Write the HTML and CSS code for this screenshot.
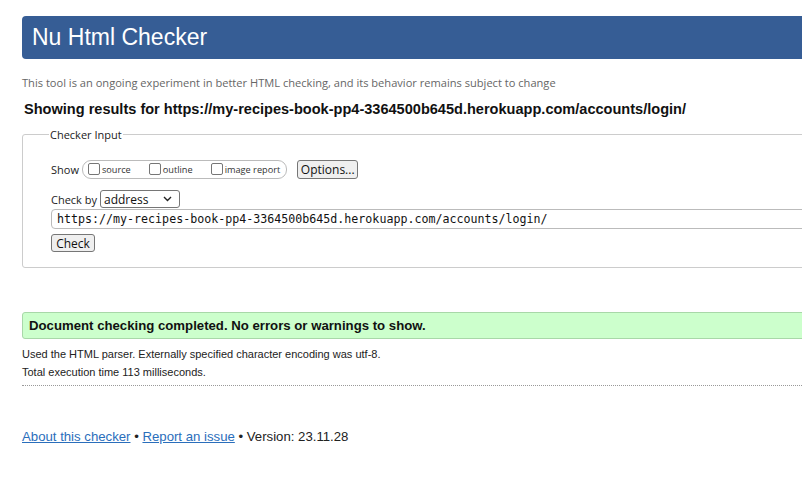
FILE: index.html
```html
<!DOCTYPE html>
<html>
<head>
<meta charset="utf-8">
<link rel="stylesheet" href="styles.css">
</head>
<body>
<div class="page">
  <h1 class="banner">Nu Html Checker</h1>
  <p class="tagline">This tool is an ongoing experiment in better HTML checking, and its behavior remains subject to change</p>
  <p class="results-for">Showing results for https://my-recipes-book-pp4-3364500b645d.herokuapp.com/accounts/login/</p>
  <fieldset class="input-box">
    <legend class="legend">Checker Input</legend>
    <div class="row show-row">
      <span class="label">Show</span>
      <span class="opts">
        <label class="opt"><span class="cb"></span>source</label>
        <label class="opt"><span class="cb"></span>outline</label>
        <label class="opt"><span class="cb"></span>image report</label>
      </span>
      <span class="btn options-btn">Options...</span>
    </div>
    <div class="row by-row">
      <span class="label">Check by</span>
      <span class="select">address<svg class="chev" width="9" height="6" viewBox="0 0 9 6"><path d="M1 1l3.5 3.5L8 1" fill="none" stroke="#222" stroke-width="1.4"/></svg></span>
    </div>
    <div class="url-input">https://my-recipes-book-pp4-3364500b645d.herokuapp.com/accounts/login/</div>
    <div class="row check-row"><span class="btn check-btn">Check</span></div>
  </fieldset>
  <div class="success">Document checking completed. No errors or warnings to show.</div>
  <p class="details">Used the HTML parser. Externally specified character encoding was utf-8.</p>
  <p class="details">Total execution time 113 milliseconds.</p>
  <hr class="dots">
  <p class="footer"><a href="#">About this checker</a> • <a href="#">Report an issue</a> • Version: 23.11.28</p>
</div>
</body>
</html>
```
FILE: styles.css
```css
html, body { margin: 0; padding: 0; overflow: hidden; background: #fff; }
body { width: 802px; height: 488px; }
.page {
  margin-left: 22px;
  width: 900px;
  padding-top: 16px;
  font-family: "Liberation Sans", Arial, sans-serif;
  color: #111;
}
.banner {
  margin: 0;
  height: 43px;
  box-sizing: border-box;
  padding: 7px 0 0 10px;
  background: #365d95;
  color: #fff;
  font-weight: normal;
  font-size: 23px;
  line-height: 28px;
  border-radius: 4px 0 0 4px;
}
.tagline {
  margin: 17px 0 0 0;
  font-family: "Open Sans", sans-serif;
  font-size: 11.1px;
  line-height: 14px;
  color: #666;
}
.results-for {
  margin: 10px 0 0 2px;
  font-weight: bold;
  font-size: 14.55px;
  line-height: 18px;
  color: #111;
}
.input-box {
  margin: 9px 0 0 0;
  border: 1px solid #ccc;
  border-radius: 3px;
  padding: 0 0 15px 28px;
}
.legend {
  font-family: "Open Sans", sans-serif;
  font-size: 11px;
  color: #222;
  padding: 0 1px;
  margin-left: -2px;
}
.row { display: flex; align-items: center; }
.show-row { margin-top: 17px; height: 20px; }
.label {
  font-family: "Open Sans", sans-serif;
  font-size: 11px;
  color: #222;
  margin-right: 3px;
}
.opts {
  display: flex;
  align-items: center;
  height: 17px;
  border: 1px solid #bbb;
  border-radius: 9px;
  padding: 0 6px 0 5px;
  margin-right: 10px;
}
.opt {
  display: flex;
  align-items: center;
  font-family: "Open Sans", sans-serif;
  font-size: 9.2px;
  color: #333;
  margin-right: 18px;
}
.opt:last-child { margin-right: 0; }
.cb {
  width: 12px; height: 12px;
  border: 1px solid #767676;
  border-radius: 2px;
  margin-right: 2px;
  box-sizing: border-box;
}
.btn {
  display: inline-flex;
  align-items: center;
  justify-content: center;
  box-sizing: border-box;
  border: 1px solid #767676;
  border-radius: 3px;
  background: #efefef;
  font-family: "Open Sans", sans-serif;
  color: #111;
}
.options-btn { width: 61px; height: 19px; font-size: 12px; }
.by-row { margin-top: 11px; height: 18px; }
.select {
  display: inline-flex;
  align-items: center;
  justify-content: space-between;
  box-sizing: border-box;
  width: 80px; height: 18px;
  border: 1px solid #767676;
  border-radius: 3px;
  padding: 0 7px 0 3px;
  font-family: "Open Sans", sans-serif;
  font-size: 12px;
  color: #111;
}
.url-input {
  margin-top: 1px;
  box-sizing: border-box;
  height: 20px;
  border: 1px solid #bbb;
  border-radius: 4px;
  padding: 2px 0 0 5px;
  font-family: "DejaVu Sans Mono", "Liberation Mono", monospace;
  font-size: 11.65px;
  line-height: 14px;
  color: #111;
}
.check-row { margin-top: 5px; }
.check-btn { width: 44px; height: 18px; font-size: 12px; }
.success {
  margin-top: 44px;
  box-sizing: border-box;
  height: 27px;
  background: #ccffcc;
  border: 1px solid #a8d8a8;
  border-radius: 3px 0 0 3px;
  padding: 5px 0 0 6px;
  font-weight: bold;
  font-size: 13.2px;
  line-height: 16px;
  color: #111;
}
.details {
  margin: 0;
  font-size: 11px;
  line-height: 18px;
  color: #222;
}
.success + .details { margin-top: 6px; }
.dots {
  margin: 4px 0 0 0;
  border: 0;
  border-top: 1px dotted #999;
  height: 0;
}
.footer {
  margin: 43px 0 0 0;
  font-size: 13.2px;
  line-height: 16px;
  color: #222;
}
.footer a { color: #2a6ebb; text-decoration: underline; }
```
